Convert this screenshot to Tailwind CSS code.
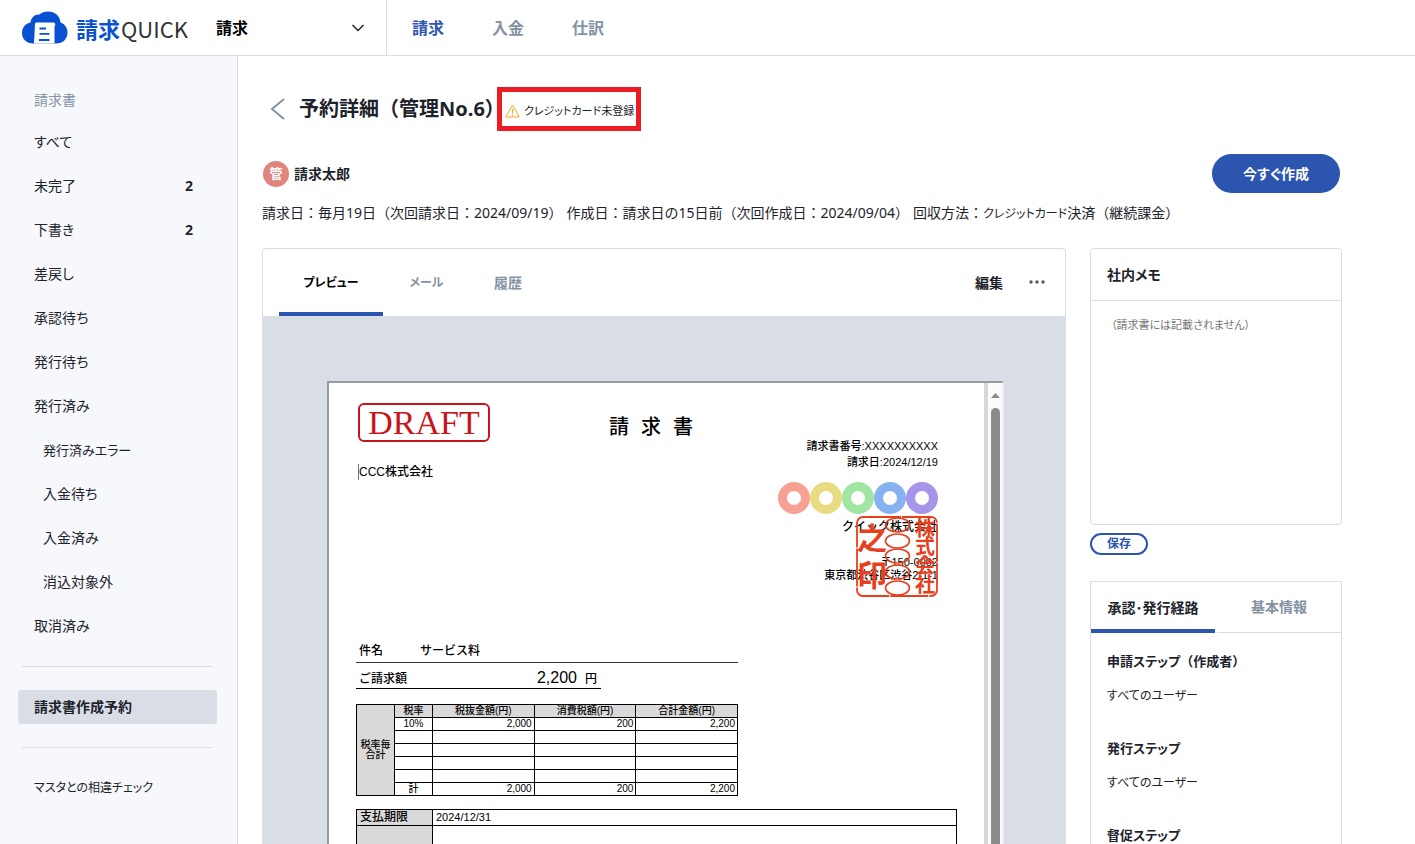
<!DOCTYPE html>
<html lang="ja">
<head>
    <meta charset="UTF-8">
    <meta name="viewport" content="width=device-width, initial-scale=1.0">
    <title>予約詳細 | 請求QUICK</title>
    <script src="https://cdn.jsdelivr.net/npm/@tailwindcss/browser@4"></script>
</head>
<body class="h-screen flex flex-col overflow-hidden bg-white text-sm text-[#1d232b] font-['Noto_Sans','Noto_Sans_CJK_JP',sans-serif]">

    <!-- Header -->
    <header class="flex h-14 shrink-0 items-stretch border-b border-[#d9dde6]">
        <div class="flex w-[387px] shrink-0 items-center border-r border-[#d9dde6] pl-[22px] pr-5">
            <a href="#" class="flex items-center gap-2">
                <svg class="h-[33px] w-[46px]" viewBox="0 0 46 32">
                    <path fill="#0a50d2" d="M11 32C4.500 32 0 27.500 0 21.500C0 16 3.500 12 8.500 11C9 6 13 2.500 17.500 3C19.500 1 22.500 0 26 0C33 0 38 4.500 38.500 11C43 12.500 45.500 16.500 45.500 21C45.500 27.500 41 32 34 32Z"/>
                    <path fill="#fff" d="M14.500 11H31.500Q33.500 11 33.300 13.500L32.500 15V32H12L13 12.500Q13 11 14.500 11Z"/>
                    <path stroke="#0a50d2" stroke-width="1.800" d="M17.500 17H24M17.500 22.300H27.500M17 28.500H27.500"/>
                </svg>
                <span class="flex items-center text-[22px] leading-8 font-['Noto_Sans_CJK_JP',sans-serif]"><span class="font-bold text-[#0a50d2]">請求</span><span class="ml-px text-[#333]">QUICK</span></span>
            </a>
            <button type="button" class="ml-7 flex flex-1 items-center justify-between text-base font-bold text-black">
                請求
                <svg class="h-4 w-4" viewBox="0 0 16 16" fill="none" stroke="#1d232b" stroke-width="1.500"><path d="M2.500 5L8 10.500L13.500 5"/></svg>
            </button>
        </div>
        <nav class="flex items-center gap-12 pl-[25px] text-base font-bold text-[#8492a3]">
            <a href="#" class="text-[#2c55b0]">請求</a>
            <a href="#">入金</a>
            <a href="#">仕訳</a>
        </nav>
    </header>

    <div class="flex min-h-0 flex-1">
        <!-- Sidebar -->
        <aside class="w-[238px] shrink-0 overflow-hidden border-r border-[#d9dde6] bg-[#f6f8fc] pl-[18px] pr-5 pt-8">
            <h2 class="mb-2 px-4 leading-6 text-[#8492a3]">請求書</h2>
            <ul>
                <li><a href="#" class="flex h-11 items-center px-4 [font-feature-settings:'palt']">すべて</a></li>
                <li><a href="#" class="flex h-11 items-center justify-between pl-4 pr-6">未完了<b>2</b></a></li>
                <li><a href="#" class="flex h-11 items-center justify-between pl-4 pr-6 [font-feature-settings:'palt']">下書き<b>2</b></a></li>
                <li><a href="#" class="flex h-11 items-center px-4 [font-feature-settings:'palt']">差戻し</a></li>
                <li><a href="#" class="flex h-11 items-center px-4 [font-feature-settings:'palt']">承認待ち</a></li>
                <li><a href="#" class="flex h-11 items-center px-4 [font-feature-settings:'palt']">発行待ち</a></li>
                <li><a href="#" class="flex h-11 items-center px-4 [font-feature-settings:'palt']">発行済み</a></li>
                <li><a href="#" class="flex h-11 items-center pl-[25px] text-[13px] [font-feature-settings:'palt']">発行済みエラー</a></li>
                <li><a href="#" class="flex h-11 items-center pl-[25px] [font-feature-settings:'palt']">入金待ち</a></li>
                <li><a href="#" class="flex h-11 items-center pl-[25px] [font-feature-settings:'palt']">入金済み</a></li>
                <li><a href="#" class="flex h-11 items-center pl-[25px]">消込対象外</a></li>
                <li><a href="#" class="flex h-11 items-center px-4 [font-feature-settings:'palt']">取消済み</a></li>
            </ul>
            <hr class="mx-1 mt-[18px] border-[#d9dde6]">
            <a href="#" class="my-[23px] flex h-[34px] items-center rounded-[3px] bg-[#d9dde6] px-4 font-bold">請求書作成予約</a>
            <hr class="mx-1 border-[#d9dde6]">
            <a href="#" class="mt-[18px] flex h-11 items-center px-4 text-xs [font-feature-settings:'palt']">マスタとの相違チェック</a>
        </aside>

        <!-- Main -->
        <main class="flex min-w-0 flex-1 flex-col overflow-hidden pl-6 pr-[73px] pt-[31px]">
            <div class="flex h-11 items-center">
                <a href="#" aria-label="戻る" class="ml-2 mr-[13px]">
                    <svg class="h-6 w-4" viewBox="0 0 16 24" fill="none" stroke="#8492a3" stroke-width="2"><path d="M14 2L2 12L14 22"/></svg>
                </a>
                <h1 class="w-[198px] whitespace-nowrap text-xl font-bold">予約詳細（管理No.6）</h1>
                <div class="flex h-11 w-36 items-center gap-1 whitespace-nowrap border-[5px] border-[#ed1c24] pl-[3px] pt-[3px] text-[11px] [font-feature-settings:'palt']">
                    <svg class="h-[14px] w-[15px] shrink-0" viewBox="0 0 15 14" fill="none" stroke="#f9a72b"><path stroke-linejoin="round" d="M7.500 1L14.300 13H0.700Z"/><path stroke-width="1.300" d="M7.500 5V9.500M7.500 10.500V11.800"/></svg>
                    クレジットカード未登録
                </div>
            </div>

            <div class="mt-[23px] flex h-[39px] items-center">
                <span class="ml-px mr-[5px] flex h-[26px] w-[26px] items-center justify-center rounded-full bg-[#df857e] text-[13px] font-bold text-white">管</span>
                <span class="font-bold">請求太郎</span>
                <button type="button" class="ml-auto mr-[2px] h-[39px] w-32 rounded-full bg-[#2c55b0] font-bold text-white [font-feature-settings:'palt']">今すぐ作成</button>
            </div>

            <p class="mt-[10px] flex gap-1 whitespace-nowrap leading-5">
                <span>請求日：毎月19日（次回請求日：2024/09/19）</span>
                <span>作成日：請求日の15日前（次回作成日：2024/09/04）</span>
                <span>回収方法：<span class="text-xs [font-feature-settings:'palt']">クレジットカード</span>決済（継続課金）</span>
            </p>

            <div class="mt-[25px] flex items-start gap-6">
                <!-- Preview -->
                <section class="min-w-0 flex-1 rounded-t border border-[#d9dde6] bg-[#d9dde6]">
                    <div class="flex h-[67px] items-stretch rounded-t bg-white pl-4 pr-5">
                        <div class="flex font-bold text-[#8492a3] [font-feature-settings:'palt']">
                            <button type="button" class="w-[104px] border-b-4 border-[#2c55b0] pt-1 text-xs text-black">プレビュー</button>
                            <button type="button" class="w-[87px] border-b-4 border-transparent pt-1 text-xs">メール</button>
                            <button type="button" class="w-[76px] border-b-4 border-transparent pt-1">履歴</button>
                        </div>
                        <div class="ml-auto flex items-center gap-[26px]">
                            <button type="button" class="font-bold">編集</button>
                            <button type="button" aria-label="その他">
                                <svg class="h-4 w-4" viewBox="0 0 16 16" fill="#4d5b6b"><circle cx="2" cy="7" r="1.700"/><circle cx="8" cy="7" r="1.700"/><circle cx="14" cy="7" r="1.700"/></svg>
                            </button>
                        </div>
                    </div>
                    <div class="pb-16 pl-16 pr-[61px] pt-[65px]">
                        <div class="flex border-2 border-b-[#eee] border-l-[#999b9b] border-r-[#eee] border-t-[#999b9b] bg-[#fcfcfc] text-black">
                            <!-- Invoice -->
                            <article class="min-w-0 flex-1 bg-white px-[27px] pb-20 pt-5 text-[11px] font-medium leading-4 font-['Liberation_Sans','Noto_Sans_CJK_JP',sans-serif]">
                                <div class="grid grid-cols-[1fr_auto_1fr] pl-[2px] pr-[19px]">
                                    <div>
                                        <div class="flex h-[39px] w-[132px] items-center justify-center rounded-md border-2 border-[#c8141b] text-[34px] leading-9 font-normal text-[#c8141b] font-['Liberation_Serif',serif]">DRAFT</div>
                                        <p class="mt-[22px] flex h-4 items-center border-l border-gray-500 text-xs">CCC株式会社</p>
                                    </div>
                                    <h2 class="flex h-12 items-center gap-3 pl-[6px] text-xl"><span>請</span><span>求</span><span>書</span></h2>
                                    <div class="relative text-right">
                                        <p class="pt-[35px]">請求書番号:XXXXXXXXXX</p>
                                        <p>請求日:2024/12/19</p>
                                        <svg class="ml-auto mt-[11px] h-[34px] w-40" viewBox="0 0 160 34" fill="none" stroke-width="9">
                                            <circle cx="16" cy="17" r="11.500" stroke="#f5a193"/>
                                            <circle cx="48" cy="17" r="11.500" stroke="#e7dc82"/>
                                            <circle cx="80" cy="17" r="11.500" stroke="#a0e5a2"/>
                                            <circle cx="112" cy="17" r="11.500" stroke="#86b2f2"/>
                                            <circle cx="144" cy="17" r="11.500" stroke="#a695e8"/>
                                        </svg>
                                        <p class="mt-[2px] text-xs leading-5">クイック株式会社</p>
                                        <p class="mt-[18px] leading-[14px]">〒150-0002</p>
                                        <p class="leading-[13px]">東京都渋谷区渋谷2-1-1</p>
                                        <!-- Company seal -->
                                        <svg class="absolute right-0 top-[113px] h-[81px] w-[82px]" viewBox="0 0 82 81" fill="none" stroke="#e8401c">
                                            <rect x="1" y="1" width="80" height="79" rx="6" stroke-width="1.800" stroke-dasharray="38 1"/>
                                            <g stroke-width="1.600">
                                                <ellipse cx="41.500" cy="9" rx="12" ry="7"/>
                                                <ellipse cx="41.500" cy="25" rx="12" ry="7"/>
                                                <ellipse cx="41.500" cy="40" rx="12" ry="7"/>
                                                <ellipse cx="41.500" cy="56" rx="12" ry="7"/>
                                                <ellipse cx="41.500" cy="72" rx="12" ry="7"/>
                                            </g>
                                            <g fill="#e8401c" stroke="none" font-size="20" font-weight="700" text-anchor="middle">
                                                <text x="69" y="20">株</text>
                                                <text x="69" y="38">式</text>
                                                <text x="69" y="57">会</text>
                                                <text x="69" y="76">社</text>
                                                <text x="16" y="33" font-size="30">之</text>
                                                <text x="16" y="70" font-size="30">印</text>
                                            </g>
                                        </svg>
                                    </div>
                                </div>

                                <dl class="mt-[61px] w-[382px] text-xs">
                                    <div class="flex h-5 border-b border-[#333] pl-[3px] leading-4"><dt class="w-[61px]">件名</dt><dd>サービス料</dd></div>
                                    <div class="flex h-[26px] w-[245px] items-end justify-between border-b border-black pl-[3px] pr-1 leading-[18px]"><dt>ご請求額</dt><dd><span class="mr-2 text-base leading-[18px]">2,200</span>円</dd></div>
                                </dl>

                                <table class="mt-[15px] w-[382px] table-fixed border-collapse text-[10px] leading-3 [&_td]:h-[13px] [&_td]:border [&_td]:border-black [&_td]:px-[2px] [&_th]:h-[13px] [&_th]:border [&_th]:border-black [&_th]:bg-[#d9d9d9] [&_th]:font-medium">
                                    <colgroup><col class="w-[38px]"><col class="w-[38px]"><col><col><col></colgroup>
                                    <tbody class="text-right">
                                        <tr class="text-center"><th rowspan="7" scope="rowgroup" class="leading-[10px]">税率毎<br>合計</th><th scope="col">税率</th><th scope="col">税抜金額(円)</th><th scope="col">消費税額(円)</th><th scope="col">合計金額(円)</th></tr>
                                        <tr><td class="text-center">10%</td><td>2,000</td><td>200</td><td>2,200</td></tr>
                                        <tr><td></td><td></td><td></td><td></td></tr>
                                        <tr><td></td><td></td><td></td><td></td></tr>
                                        <tr><td></td><td></td><td></td><td></td></tr>
                                        <tr><td></td><td></td><td></td><td></td></tr>
                                        <tr><td class="text-center">計</td><td>2,000</td><td>200</td><td>2,200</td></tr>
                                    </tbody>
                                </table>

                                <table class="mt-[13px] w-full table-fixed border-collapse leading-[15px] [&_td]:border [&_td]:border-black [&_td]:px-[3px] [&_th]:border [&_th]:border-black [&_th]:bg-[#d9d9d9] [&_th]:px-[3px]">
                                    <colgroup><col class="w-[76px]"><col></colgroup>
                                    <tbody>
                                        <tr><th scope="row" class="text-left text-xs font-medium leading-[15px]">支払期限</th><td>2024/12/31</td></tr>
                                        <tr><th class="h-20"></th><td></td></tr>
                                    </tbody>
                                </table>
                            </article>
                            <!-- Scrollbar -->
                            <div class="w-1 bg-[#d8d8d8]"></div>
                            <div class="flex w-[14px] flex-col items-center">
                                <svg class="mb-[10px] mt-[10px] h-[5px] w-[9px] shrink-0" viewBox="0 0 9 5" fill="#8b8b8b"><path d="M0 5L4.500 0L9 5Z"/></svg>
                                <div class="w-[9px] flex-1 rounded-full bg-[#8b8b8b]"></div>
                            </div>
                        </div>
                    </div>
                </section>

                <!-- Side column -->
                <div class="w-[252px] shrink-0">
                    <section class="rounded border border-[#d9dde6]">
                        <h2 class="border-b border-[#d9dde6] px-4 font-bold leading-[51px] [font-feature-settings:'palt']"><label for="memo">社内メモ</label></h2>
                        <textarea id="memo" placeholder="（請求書には記載されません）" class="block h-[223px] w-full resize-none px-5 py-4 text-[11px] leading-4 outline-none [font-feature-settings:'palt'] placeholder:text-[#757575]"></textarea>
                    </section>
                    <button type="button" class="mt-2 block h-[22px] w-[58px] rounded-full border-2 border-[#2c55b0] text-xs font-bold leading-[18px] text-[#2c55b0]">保存</button>

                    <section class="mt-[26px] border border-[#d9dde6]">
                        <div class="flex h-[51px] gap-[2px] font-bold">
                            <button type="button" class="flex-1 border-b-4 border-[#2c55b0] pt-1 [font-feature-settings:'palt']">承認･発行経路</button>
                            <button type="button" class="flex-1 border-b border-[#d9dde6] text-[#8492a3]">基本情報</button>
                        </div>
                        <dl class="px-4 pb-8 pt-[18px] text-[13px] leading-5 [&_dd]:mb-8 [&_dd]:mt-[15px] [&_dd]:[font-feature-settings:'palt'] [&_dt]:font-bold">
                            <dt><span class="[font-feature-settings:'palt']">申請ステップ</span>（作成者）</dt>
                            <dd class="text-xs leading-5">すべてのユーザー</dd>
                            <dt class="[font-feature-settings:'palt']">発行ステップ</dt>
                            <dd class="text-xs leading-5">すべてのユーザー</dd>
                            <dt class="[font-feature-settings:'palt']">督促ステップ</dt>
                            <dd class="text-xs leading-5">すべてのユーザー</dd>
                        </dl>
                    </section>
                </div>
            </div>
        </main>
    </div>
</body>
</html>
